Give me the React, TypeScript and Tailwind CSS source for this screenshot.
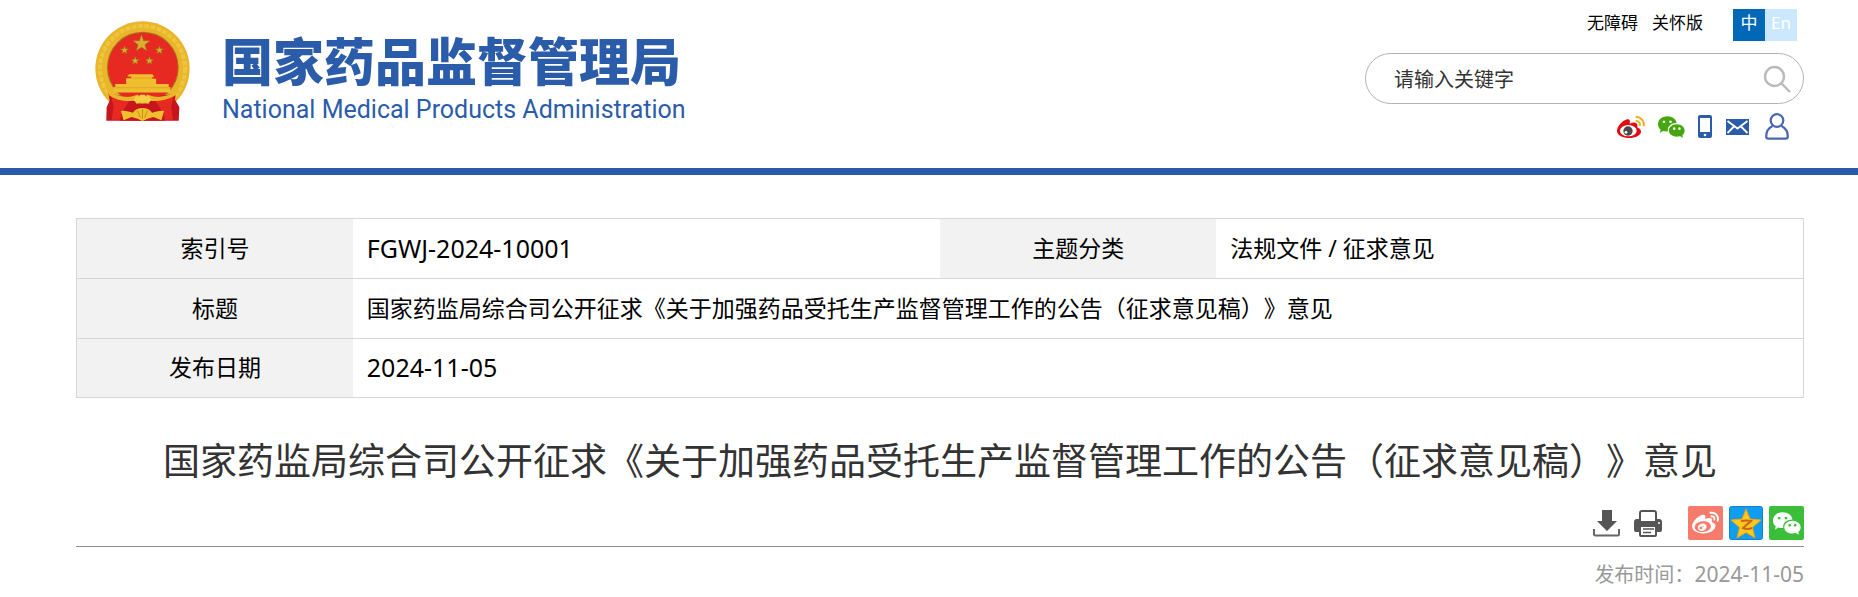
import { FaWeibo } from "react-icons/fa";

const title = "国家药监局综合司公开征求《关于加强药品受托生产监督管理工作的公告（征求意见稿）》意见";

const star = (cx: number, cy: number, r: number) =>
    Array.from({ length: 10 }, (_, i) => {
        const radius = i % 2 ? r * 0.4 : r;
        const angle = (Math.PI / 5) * i - Math.PI / 2;
        return `${cx + radius * Math.cos(angle)},${cy + radius * Math.sin(angle)}`;
    }).join(" ");

const Emblem = () => (
    <svg viewBox="44 34 286 302" className="w-[95px] h-[101px] shrink-0" aria-hidden="true">
        <circle cx="187" cy="176" r="142" fill="#e8b52c" />
        <circle cx="187" cy="176" r="128" fill="none" stroke="#efc53c" strokeWidth="12" strokeDasharray="14 5" />
        <circle cx="188" cy="173" r="108" fill="#a8741a" />
        <circle cx="188" cy="173" r="105" fill="#e62a22" />
        <g fill="#d9ae2e" stroke="#94701c" strokeWidth="1.5">
            <polygon points={star(184, 101, 27)} />
            <polygon points={star(133, 121, 13)} />
            <polygon points={star(238, 121, 13)} />
            <polygon points={star(165, 153, 13)} />
            <polygon points={star(208, 153, 13)} />
        </g>
        <path fill="#f0bf30" d="M147 193h70l5 9h-7v5h7v16h44v9h5v16H100v-16h5v-9h42v-9h-9v-9h15v-5h-12z" />
        <path fill="#f0bf30" d="M138 207h90v16h-90z" />
        <path stroke="#d39a1e" strokeWidth="2" d="M148 205h68M105 234h164" />
        <path fill="#c5161d" d="M84 248c28 10 55 13 78 11l25 8 25-8c24 2 48-2 75-11l-2 22 13 23-2 40H78l1-40 9-20z" />
        <path fill="#e62a22" d="M92 258c15 10 34 14 58 12l-20 30-10 30H94l6-40zM281 258c-15 10-34 14-58 12l20 30 10 30h26l-6-40z" />
        <path fill="#c5161d" d="M124 303l-4 30h134l-4-30z" />
        <path fill="#e9b62c" d="M74 226l26 26c20 9 45 12 62 6l10-4 15 12 15-12 10 4c20 6 43 3 62-6l28-26-14 30c-27 17-60 20-76 17l-13 8h-24l-13-8c-22 3-56 0-76-17z" />
        <path fill="#f6d047" d="M160 269l8-11 8 3 4-6h14l4 6 8-3 8 11-10 14-12-8-5 7-5-7-12 8z" />
        <path fill="#f0bf30" d="M122 304c15-2 25 3 36 5 5-9 16-14 29-14s24 5 29 14c11-2 21-7 36-5l-8 28-24-10-18 5-15 7-15-7-18-5-24 10z" />
        <path stroke="#c98e1b" strokeWidth="3" d="M187 298v30M172 303l9 21M202 303l-9 21" />
    </svg>
);

const WeiboColor = () => (
    <svg viewBox="0 0 84 66" className="w-7 h-[22px]" aria-hidden="true">
        <path fill="#e30b12" d="M0 45C0 29 20 11 31 10c8 0 9 6 7 13 11-5 23-5 23 5 0 5-1 6 3 8 5 2 8 6 8 11 0 11-17 19-35 19S0 59 0 45z" />
        <ellipse cx="34" cy="44" rx="25" ry="17" fill="#fff" />
        <circle cx="33" cy="45" r="14" fill="#4a4a4a" />
        <circle cx="27" cy="49" r="4" fill="#fff" />
        <path fill="none" stroke="#eeb01c" strokeWidth="6" d="M56 3c16-1 27 12 24 28M56 15c9-1 14 6 12 14" />
    </svg>
);

const Wechat = ({ className, fill }: { className: string; fill: string }) => (
    <svg viewBox="0 0 82 66" className={className} fill={fill} aria-hidden="true">
        <path fillRule="evenodd" d="M28 0C44 0 55 9 57 21 40 21 28 31 30 46c-6 1-11 0-15-1L6 51l2-10C3 37 0 31 0 24 0 11 12 0 28 0zM18 13a4 4 0 1 0 .1 0zM38 13a4 4 0 1 0 .1 0z" />
        <path fillRule="evenodd" d="M57 25c14 0 24 9 24 19 0 6-3 11-7 14l2 8-9-5c-19 5-34-4-34-17 0-10 10-19 24-19zM49 34a4 4 0 1 0 .1 0zM65 34a4 4 0 1 0 .1 0z" />
    </svg>
);

const Phone = () => (
    <svg viewBox="0 0 14 23" className="w-3.5 h-[23px]" aria-hidden="true">
        <rect width="14" height="23" rx="2" fill="#2a5caa" />
        <rect x="2" y="3" width="10" height="14" fill="#fff" />
        <circle cx="7" cy="20" r="1.3" fill="#fff" />
    </svg>
);

const Mail = () => (
    <svg viewBox="0 0 23 16" className="w-[23px] h-4" aria-hidden="true">
        <rect width="23" height="16" fill="#2a5caa" />
        <path fill="none" stroke="#fff" strokeWidth="1.8" d="M1.5 2l10 7.5 10-7.5M1.5 14l6.5-6.5M21.5 14L15 7.5" />
    </svg>
);

const User = () => (
    <svg viewBox="0 0 24 27" className="w-6 h-[27px]" fill="none" stroke="#4a67b3" strokeWidth="2.2" aria-hidden="true">
        <circle cx="12" cy="7.5" r="6.3" />
        <path d="M7.5 13C3.500 15 1.200 19 1.200 23.500c0 1.500.8 2.200 2.300 2.200h17c1.500 0 2.300-.7 2.300-2.200 0-4.500-2.300-8.500-6.300-10.500" />
    </svg>
);

const Download = () => (
    <svg viewBox="0 0 27 27" className="w-[27px] h-[27px]" aria-hidden="true">
        <path fill="#555" d="M9 0h10v11h5L14 21 4 11h5z" />
        <path fill="none" stroke="#666" strokeWidth="2" d="M1 19v5q0 1.500 1.500 1.500h22q1.500 0 1.500-1.500v-5" />
    </svg>
);

const Printer = () => (
    <svg viewBox="0 0 28 27" className="w-7 h-[27px]" aria-hidden="true">
        <path fill="#fff" stroke="#555" strokeWidth="2" d="M6 12V3q0-2 2-2h12q2 0 2 2v9" />
        <path fill="#555" d="M3 9h2v2h18V9h2q3 0 3 3v8q0 2-2 2H2q-2 0-2-2v-8q0-3 3-3z" />
        <circle cx="25" cy="13" r="1" fill="#fff" />
        <rect x="6" y="16" width="16" height="10" rx="1" fill="#fff" stroke="#555" strokeWidth="2" />
        <path stroke="#555" strokeWidth="1.5" d="M9 19h11M9 22.500h8" />
    </svg>
);

const Qzone = () => (
    <svg viewBox="0 0 34 34" className="w-[34px] h-[34px]" aria-hidden="true">
        <rect x=".5" y=".5" width="33" height="33" rx="2" fill="#0f9df0" stroke="#1780cf" />
        <path fill="#fcc81c" stroke="#f0a012" strokeLinejoin="round" d="M17 3l4 10 11 1-8.500 7.500L26 32l-9-5.500L8 32l2.500-10.500L2 14l11-1z" />
        <path fill="none" stroke="#c8641b" strokeWidth="2" d="M12 15q5-1 10 0l-8 7q4 2 9 0" />
    </svg>
);

const App = () => {
    return (
        <div
            className="min-h-screen bg-white text-black font-['Noto_Sans','Noto_Sans_CJK_SC',sans-serif] [text-spacing-trim:space-all]"
            lang="zh-CN"
        >
            <header className="flex justify-between h-[175px] pl-[95px] pr-[54px] border-b-[7px] border-[#2a5caa]">
                <a href="#" className="flex items-start gap-8 pt-[21px] text-[#2a5caa]">
                    <Emblem />
                    <span className="flex flex-col pt-3 whitespace-nowrap">
                        <span className="text-[51px] leading-[52px] font-black font-['Noto_Sans_CJK_SC',sans-serif]">国家药品监督管理局</span>
                        <span className="mt-2.5 text-[25px] leading-[30px] font-['Roboto',sans-serif]">National Medical Products Administration</span>
                    </span>
                </a>
                <div className="flex flex-col items-end pt-[9px]">
                    <nav className="flex items-center pr-[7px] text-[17px]">
                        <a href="#" className="mr-3.5 pb-1 leading-7">无障碍</a>
                        <a href="#" className="mr-[30px] pb-1 leading-7">关怀版</a>
                        <a href="#" className="w-8 h-8 pb-1 text-center leading-7 bg-[#0068b7] text-white">中</a>
                        <a href="#" className="w-8 h-8 pb-1 text-center leading-7 bg-[#cce8ff] text-white">En</a>
                    </nav>
                    <form className="flex items-center w-[439px] h-[51px] mt-3 pl-7 pr-3 border border-[#b3b3b3] rounded-full">
                        <input
                            type="text"
                            aria-label="请输入关键字"
                            placeholder="请输入关键字"
                            className="flex-1 min-w-0 pt-0.5 text-[20px] leading-7 outline-none placeholder:text-[#333]"
                        />
                        <button type="button" aria-label="搜索">
                            <svg viewBox="0 0 28 28" className="w-7 h-7" fill="none" stroke="#bbb" strokeWidth="2.4" aria-hidden="true">
                                <circle cx="11.5" cy="11.5" r="9.5" />
                                <path d="M18.5 18.5L27 27" />
                            </svg>
                        </button>
                    </form>
                    <div className="flex items-center h-[27px] mt-[9px] pr-[15px]">
                        <a href="#" aria-label="微博" className="mr-[13px]"><WeiboColor /></a>
                        <a href="#" aria-label="微信" className="mr-[13px]"><Wechat className="w-[27px] h-[22px]" fill="#46a60f" /></a>
                        <a href="#" aria-label="手机版" className="mr-3.5"><Phone /></a>
                        <a href="#" aria-label="邮箱" className="mr-4"><Mail /></a>
                        <a href="#" aria-label="用户"><User /></a>
                    </div>
                </div>
            </header>

            <main className="pl-[76px] pr-[54px] pt-[43px]">
                <table className="w-full table-fixed border-collapse border border-[#d6d6d6] text-[23px] leading-7">
                    <colgroup>
                        <col className="w-[16%]" />
                        <col className="w-[34%]" />
                        <col className="w-[16%]" />
                        <col className="w-[34%]" />
                    </colgroup>
                    <tbody>
                        <tr className="h-[60px] border-b border-[#d6d6d6]">
                            <th scope="row" className="pb-0.5 bg-[#f2f2f2] font-normal">索引号</th>
                            <td className="px-3.5 pb-0.5 text-[25px]">FGWJ-2024-10001</td>
                            <th scope="row" className="pb-0.5 bg-[#f2f2f2] font-normal">主题分类</th>
                            <td className="px-3.5 pb-0.5">法规文件 / 征求意见</td>
                        </tr>
                        <tr className="h-[60px] border-b border-[#d6d6d6]">
                            <th scope="row" className="pb-0.5 bg-[#f2f2f2] font-normal">标题</th>
                            <td colSpan={3} className="px-3.5 pb-0.5">{title}</td>
                        </tr>
                        <tr className="h-[59px]">
                            <th scope="row" className="pb-0.5 bg-[#f2f2f2] font-normal">发布日期</th>
                            <td colSpan={3} className="px-3.5 pb-0.5 text-[25px]">2024-11-05</td>
                        </tr>
                    </tbody>
                </table>

                <h1 className="mt-[35px] text-center text-[37px] leading-[56px] text-[#333]">{title}</h1>

                <div className="flex items-center justify-end mt-[17px] pb-1.5 border-b border-[#8c8c8c]">
                    <button type="button" aria-label="下载" className="mr-3.5"><Download /></button>
                    <button type="button" aria-label="打印" className="mr-[26px]"><Printer /></button>
                    <a href="#" aria-label="分享到微博" className="flex items-center justify-center w-[35px] h-[34px] mr-1.5 rounded-xs bg-[#f67b6c] text-white">
                        <FaWeibo size={27} />
                    </a>
                    <a href="#" aria-label="分享到QQ空间" className="mr-1.5"><Qzone /></a>
                    <a href="#" aria-label="分享到微信" className="flex items-center justify-center w-[35px] h-[34px] rounded-xs bg-[#3bbf3b]">
                        <Wechat className="w-7 h-[23px]" fill="#fff" />
                    </a>
                </div>

                <p className="pt-[11px] text-right text-[20px] leading-8 text-[#999]">
                    发布时间：<time dateTime="2024-11-05" className="text-[21px]">2024-11-05</time>
                </p>
            </main>
        </div>
    );
};

export default App;
